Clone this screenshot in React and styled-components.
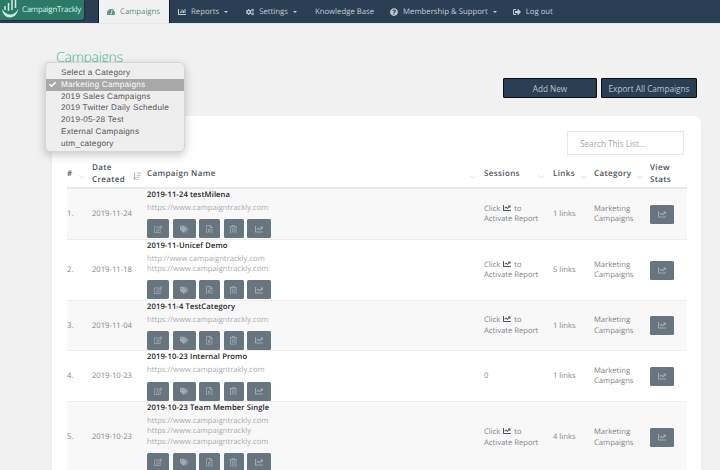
import React from 'react';
import styled, { createGlobalStyle } from 'styled-components';
import {
  FaTachometerAlt, FaChartBar, FaCogs, FaQuestionCircle, FaSignOutAlt,
  FaRegEdit, FaTags, FaRegFileExcel, FaRegTrashAlt, FaChartLine, FaSortAmountDown,
  FaCheck,
} from 'react-icons/fa';
import { FiChevronDown } from 'react-icons/fi';

const GlobalStyle = createGlobalStyle`
  html, body {
    margin: 0;
    height: 470px;
    overflow: hidden;
    background: #f1f1f1;
    font-family: "Open Sans", "Liberation Sans", sans-serif;
    text-rendering: geometricPrecision;
  }
  * { box-sizing: border-box; }
`;

const Page = styled.div`
  position: relative;
  width: 720px;
  height: 470px;
  overflow: hidden;
`;

const Nav = styled.nav`
  height: 24px;
  background: #2a3f54;
  display: flex;
  align-items: stretch;
  border-bottom: 1px solid #e4e8ea;
`;

const Logo = styled.div`
  width: 84px;
  height: 20px;
  background: #2b7a68;
  border-radius: 0 0 3px 0;
  box-shadow: 1px 1px 1px rgba(0, 0, 0, 0.25);
  display: flex;
  align-items: center;
  gap: 2px;
  padding-left: 1px;
  color: #d8efe8;
  font-size: 7.9px;
  letter-spacing: -0.25px;
  white-space: nowrap;
  margin-right: 14px;
`;

const NavItem = styled.a`
  display: flex;
  align-items: center;
  gap: 5px;
  padding: 0 ${p => p.$right || 8}px 0 8px;
  font-size: 7.75px;
  white-space: nowrap;
  color: ${p => (p.$active ? '#5b8c80' : '#c3ccd3')};
  background: ${p => (p.$active ? '#f1f1f1' : 'transparent')};
  border-left: ${p => (p.$active ? '1px solid #111c26' : 'none')};
  border-right: ${p => (p.$active ? '1px solid #111c26' : 'none')};
  svg { font-size: 8px; flex: none; }
`;

const Caret = styled.span`
  width: 0;
  height: 0;
  border-left: 2.5px solid transparent;
  border-right: 2.5px solid transparent;
  border-top: 2.5px solid #c3ccd3;
`;

const Content = styled.main`
  padding: 0 19px 0 52px;
`;

const Title = styled.h1`
  margin: 0;
  padding: 24px 0 0 4px;
  height: 54px;
  font-size: 14px;
  line-height: 20px;
  font-weight: 300;
  letter-spacing: -0.3px;
  color: #4fb897;
`;

const Actions = styled.div`
  display: flex;
  justify-content: flex-end;
  gap: 4px;
  padding-right: 4px;
  height: 38px;
`;

const ActionButton = styled.button`
  width: ${p => p.$w}px;
  height: 20px;
  padding: 0;
  background: #2a3f54;
  border: 1px solid #0e0f10;
  border-radius: 1px;
  color: #b9c3cb;
  font: 400 8.2px "Open Sans", sans-serif;
`;

const Card = styled.section`
  background: #fff;
  border-radius: 6px;
  height: 400px;
  padding: 15px 14px 0 15px;
  box-shadow: 0 1px 3px rgba(0, 0, 0, 0.03);
`;

const SearchRow = styled.div`
  display: flex;
  justify-content: flex-end;
  padding-right: 3px;
  margin-bottom: 4px;
`;

const Search = styled.input`
  width: 117px;
  height: 24px;
  border: 1px solid #e8e8e8;
  padding: 0 12px;
  font: 400 8.2px "Open Sans", sans-serif;
  outline: none;
  &::placeholder { color: #a5a5a5; }
`;

const Table = styled.table`
  width: 620px;
  border-collapse: collapse;
  table-layout: fixed;
  font-size: 7.65px;
`;

const Th = styled.th`
  position: relative;
  width: ${p => p.$w}px;
  height: 29px;
  padding: 2px 0 0;
  text-align: left;
  font-size: 8px;
  font-weight: 600;
  line-height: 11.7px;
  letter-spacing: 0.37px;
  color: #4a5157;
  border-bottom: 2px solid #e8e9ea;
`;

const SortMark = styled.span`
  position: absolute;
  right: ${p => p.$right}px;
  top: 8px;
  color: ${p => (p.$strong ? '#b0b5ba' : '#d2d6da')};
  font-size: ${p => (p.$strong ? 8.5 : 10)}px;
  line-height: 0;
  svg { display: block; margin-top: 5px; }
`;

const Row = styled.tr`
  background: ${p => (p.$odd ? '#f8f8f8' : '#fff')};
  border-bottom: 1px solid #eceded;
  color: #7f8488;
`;

const Td = styled.td`
  padding: 1px 0 0;
  line-height: 10.4px;
  vertical-align: middle;
`;

const Name = styled.div`
  font-weight: 600;
  color: #1c2126;
  line-height: 11px;
  letter-spacing: 0.1px;
`;

const Urls = styled.div`
  color: #a9acaf;
  padding: 2px 0 6px;
  line-height: 10.4px;
`;

const Tools = styled.div`
  display: flex;
  gap: 3.5px;
`;

const ToolButton = styled.span`
  width: ${p => p.$w || 22}px;
  height: 19px;
  background: #67757f;
  border-radius: 1.5px;
  display: flex;
  align-items: center;
  justify-content: center;
  color: #a2abb2;
  font-size: 8.5px;
`;

const StatsButton = styled(ToolButton)`
  width: 24px;
  height: 19px;
`;

const InlineChart = styled(FaChartLine)`
  font-size: 8px;
  vertical-align: -1px;
  color: #4e565d;
  margin: 0 1px;
`;

const Menu = styled.div`
  position: absolute;
  left: 45px;
  top: 62px;
  width: 140px;
  height: 90px;
  padding: 4px 0;
  background: #eeeeee;
  border: 1px solid #d5d5d5;
  border-radius: 5px;
  box-shadow: 0 3px 10px rgba(0, 0, 0, 0.22);
  font-family: "Liberation Sans", Arial, sans-serif;
  font-size: 8.2px;
  letter-spacing: 0.25px;
  color: #555;
`;

const MenuItem = styled.div`
  position: relative;
  height: 11.75px;
  line-height: 11.75px;
  padding-left: 15px;
  white-space: nowrap;
  ${p => p.$selected && 'background: #a8a8a8; color: #fff;'}
  svg { position: absolute; left: 3px; top: 2.5px; font-size: 7px; }
`;

const LogoMark = () => (
  <svg width="19" height="20" viewBox="0 0 19 20" fill="none">
    <path d="M1 9c.5 5 4 8.500 8 8.500 4.500 0 7.500-4 8.500-9-2 3.500-4.500 6-8 6-3.500 0-6.500-2-8.500-5.500z" fill="#cdeae1" />
    <path d="M4 10V6M7.500 11V3M11 10V0M14.500 8V-1" stroke="#cdeae1" strokeWidth="1.500" />
  </svg>
);

const categories = [
  'Select a Category',
  'Marketing Campaigns',
  '2019 Sales Campaigns',
  '2019 Twitter Daily Schedule',
  '2019-05-28 Test',
  'External Campaigns',
  'utm_category',
];

const campaigns = [
  { id: 1, date: '2019-11-24', name: '2019-11-24 testMilena', urls: ['https://www.campaigntrackly.com'], sessions: null, links: '1 links', h: 51 },
  { id: 2, date: '2019-11-18', name: '2019-11-Unicef Demo', urls: ['http://www.campaigntrackly.com', 'https://www.campaigntrackly.com'], sessions: null, links: '5 links', h: 61 },
  { id: 3, date: '2019-11-04', name: '2019-11-4 TestCategory', urls: ['https://www.campaigntrackly.com'], sessions: null, links: '1 links', h: 50 },
  { id: 4, date: '2019-10-23', name: '2019-10-23 Internal Promo', urls: ['https://www.campaigntrakly.com'], sessions: '0', links: '1 links', h: 51 },
  { id: 5, date: '2019-10-23', name: '2019-10-23 Team Member Single', urls: ['https://www.campaigntrackly.com', 'https://www.campaigntrackly', 'https://www.campaigntrackly.com'], sessions: null, links: '4 links', h: 71 },
];

const Chevron = ({ right }) => (
  <SortMark $right={right}><FiChevronDown /></SortMark>
);

export default function App() {
  return (
    <Page>
      <GlobalStyle />
      <Nav>
        <Logo><LogoMark />CampaignTrackly</Logo>
        <NavItem $active $right={9}><FaTachometerAlt />Campaigns</NavItem>
        <NavItem $right={10}><FaChartBar />Reports <Caret /></NavItem>
        <NavItem $right={10}><FaCogs />Settings <Caret /></NavItem>
        <NavItem>Knowledge Base</NavItem>
        <NavItem><FaQuestionCircle />Membership &amp; Support <Caret /></NavItem>
        <NavItem><FaSignOutAlt />Log out</NavItem>
      </Nav>

      <Content>
        <Title>Campaigns</Title>
        <Actions>
          <ActionButton $w={94}>Add New</ActionButton>
          <ActionButton $w={96}>Export All Campaigns</ActionButton>
        </Actions>
        <Card>
          <SearchRow><Search placeholder="Search This List..." /></SearchRow>
          <Table>
            <thead>
              <tr>
                <Th $w={25}>#<Chevron right={5} /></Th>
                <Th $w={55}>Date<br />Created<SortMark $strong $right={6}><FaSortAmountDown /></SortMark></Th>
                <Th $w={337}>Campaign Name<Chevron right={6} /></Th>
                <Th $w={69}>Sessions<Chevron right={7} /></Th>
                <Th $w={41}>Links<Chevron right={5} /></Th>
                <Th $w={56}>Category<Chevron right={5} /></Th>
                <Th $w={37}>View<br />Stats</Th>
              </tr>
            </thead>
            <tbody>
              {campaigns.map(c => (
                <Row key={c.id} $odd={c.id % 2 === 1} style={{ height: c.h }}>
                  <Td>{c.id}.</Td>
                  <Td>{c.date}</Td>
                  <Td>
                    <Name>{c.name}</Name>
                    <Urls>{c.urls.map((u, i) => <div key={i}>{u}</div>)}</Urls>
                    <Tools>
                      <ToolButton><FaRegEdit /></ToolButton>
                      <ToolButton $w={23}><FaTags /></ToolButton>
                      <ToolButton $w={21}><FaRegFileExcel /></ToolButton>
                      <ToolButton $w={20}><FaRegTrashAlt /></ToolButton>
                      <ToolButton $w={24}><FaChartLine /></ToolButton>
                    </Tools>
                  </Td>
                  <Td>
                    {c.sessions || <>Click <InlineChart /> to<br />Activate Report</>}
                  </Td>
                  <Td>{c.links}</Td>
                  <Td>Marketing<br />Campaigns</Td>
                  <Td>
                    <StatsButton><FaChartLine /></StatsButton>
                  </Td>
                </Row>
              ))}
            </tbody>
          </Table>
        </Card>
      </Content>

      <Menu>
        {categories.map((c, i) => (
          <MenuItem key={c} $selected={i === 1}>
            {i === 1 && <FaCheck />}
            {c}
          </MenuItem>
        ))}
      </Menu>
    </Page>
  );
}
